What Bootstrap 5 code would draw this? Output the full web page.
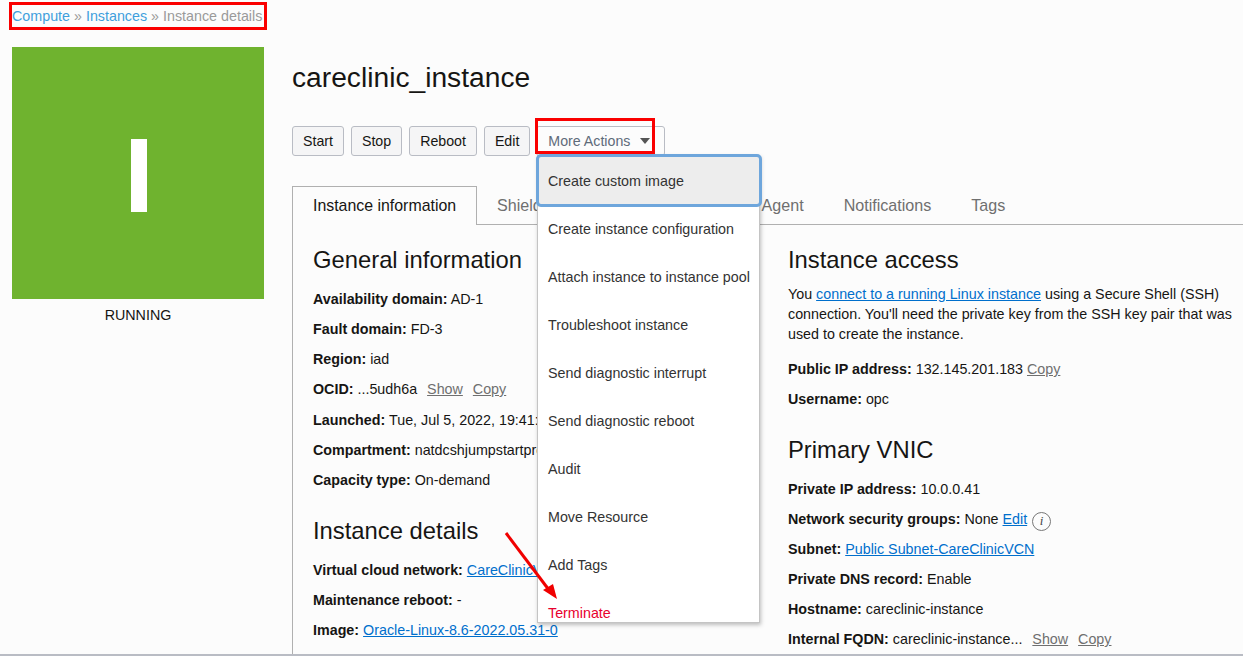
<!DOCTYPE html>
<html lang="en">
<head>
    <meta charset="UTF-8">
    <title>Instance details</title>
    <link href="https://cdn.jsdelivr.net/npm/bootstrap@5.3.3/dist/css/bootstrap.min.css" rel="stylesheet">
    <style>
        html, body { height: 656px; overflow: hidden; }
        body { font-family: "Liberation Sans", Arial, sans-serif; font-size: 14.3px; line-height: 20px; color: #161513; background: #fcfcfc; position: relative; }
        a { color: #006fcc; }
        .crumbs { height: 47px; padding: 6px 0 0 12px; color: #9a9a9a; }
        .crumbs a { color: #3f9fdc; text-decoration: none; }
        .page-wrap { height: 609px; border-bottom: 2px solid #b9bcc4; overflow: hidden; }
        .side-col { width: 252px; margin-left: 12px; margin-right: 28px; flex: none; }
        .status-tile { height: 252px; background: #6fb32f; padding: 4px 0 0 2px; }
        .status-bar { width: 16px; height: 73px; background: #fff; }
        .status-text { margin-top: 6px; }
        .main-col { flex: 1; min-width: 0; }
        .inst-title { font-size: 28.2px; line-height: 32px; font-weight: 400; margin: 14px 0 0; }
        .action-row { margin-top: 33px; gap: 7px; }
        .act-btn { height: 30px; padding: 0 10px; font-size: 14.2px; line-height: 28px; color: #161513; background: #f5f5f6; border: 1px solid #b9bcc4; border-radius: 3px; }
        .act-more { background: #fcfcfc; color: #5f6b7a; padding: 0 14px 0 11px; margin-left: -1px; }
        .caret-mark { display: inline-block; border: 5px solid transparent; border-top: 6px solid #555; border-bottom: 0; margin-left: 6px; vertical-align: 2px; }
        .tab-bar { margin-top: 30px; height: 39px; border-bottom: 1px solid #b0b0b0; font-size: 16.1px; }
        .tab-item { padding: 9px 20px 0; color: #6f6f6f; height: 39px; white-space: nowrap; }
        .tab-item.is-on { width: 185px; color: #161513; background: #fcfcfc; border: 1px solid #b0b0b0; border-bottom: 0; padding: 9px 0 0 20px; font-size: 15.9px; }
        .tab-body { border-left: 1px solid #b0b0b0; padding: 0 0 0 20px; }
        .info-left { width: 475px; flex: none; }
        .info-right { flex: 1; min-width: 0; }
        .sec-head { font-size: 23.8px; line-height: 30px; font-weight: 400; margin: 20px 0 14px; }
        .sec-gap { margin-top: 26px; }
        .left-gap { margin-top: 26px; }
        .tight-head { margin-bottom: 9px; }
        .kv { margin: 0 0 10px; white-space: nowrap; }
        .kv-tall { margin-bottom: 11px; }
        .kv-link { color: #6f6f6f; margin-left: 6px; }
        .kv-link-near { margin-left: 0; }
        .lead-text { margin: 0 0 15px; }
        .info-dot { display: inline-flex; align-items: center; justify-content: center; width: 19px; height: 19px; margin: -3px 0 -3px 1px; border: 1px solid #777; border-radius: 50%; font: italic 13px "Liberation Serif", serif; color: #444; vertical-align: -1px; }
        .act-menu { position: absolute; left: 537px; top: 155px; width: 223px; height: 468px; background: #fff; border: 1px solid #c4c4c4; box-shadow: 1px 2px 4px rgba(0,0,0,.25); overflow: hidden; color: #333; }
        .menu-row { height: 48px; line-height: 44px; padding-left: 10px; white-space: nowrap; }
        .menu-row.is-focus { height: 51px; line-height: 51px; background: #ededed; }
        .menu-row.is-red { color: #e8002d; }
        .focus-outline { position: absolute; left: 536px; top: 154px; width: 226px; height: 53px; border: 3px solid #6ea6dc; border-radius: 5px; pointer-events: none; }
        .red-box { position: absolute; border: 3px solid #fa0000; pointer-events: none; }
        .red-crumb { left: 9px; top: 2px; width: 258px; height: 28px; }
        .red-more { left: 535px; top: 118px; width: 120px; height: 36px; }
        .arrow-mark { position: absolute; left: 500px; top: 528px; width: 60px; height: 76px; }
    </style>
</head>
<body>
    <div class="crumbs"><a href="#">Compute</a> » <a href="#">Instances</a> » Instance details</div>
    <div class="page-wrap d-flex">
        <div class="side-col">
            <div class="status-tile d-flex align-items-center justify-content-center"><div class="status-bar"></div></div>
            <div class="status-text text-center">RUNNING</div>
        </div>
        <div class="main-col">
            <h1 class="inst-title">careclinic_instance</h1>
            <div class="action-row d-flex">
                <button class="act-btn">Start</button>
                <button class="act-btn">Stop</button>
                <button class="act-btn">Reboot</button>
                <button class="act-btn">Edit</button>
                <button class="act-btn act-more">More Actions <span class="caret-mark"></span></button>
            </div>
            <div class="tab-bar d-flex">
                <div class="tab-item is-on">Instance information</div>
                <div class="tab-item">Shielded instance</div>
                <div class="tab-item">Oracle Cloud Agent</div>
                <div class="tab-item">Notifications</div>
                <div class="tab-item">Tags</div>
            </div>
            <div class="tab-body d-flex">
                <div class="info-left">
                    <h2 class="sec-head">General information</h2>
                    <p class="kv"><b>Availability domain:</b> AD-1</p>
                    <p class="kv"><b>Fault domain:</b> FD-3</p>
                    <p class="kv"><b>Region:</b> iad</p>
                    <p class="kv kv-tall"><b>OCID:</b> ...5udh6a <a href="#" class="kv-link">Show</a> <a href="#" class="kv-link">Copy</a></p>
                    <p class="kv"><b>Launched:</b> Tue, Jul 5, 2022, 19:41:22 UTC</p>
                    <p class="kv"><b>Compartment:</b> natdcshjumpstartprod (root)</p>
                    <p class="kv"><b>Capacity type:</b> On-demand</p>
                    <h2 class="sec-head left-gap">Instance details</h2>
                    <p class="kv"><b>Virtual cloud network:</b> <a href="#">CareClinicVCN</a></p>
                    <p class="kv"><b>Maintenance reboot:</b> -</p>
                    <p class="kv"><b>Image:</b> <a href="#">Oracle-Linux-8.6-2022.05.31-0</a></p>
                    <p class="kv"><b>Launch mode:</b> PARAVIRTUALIZED</p>
                </div>
                <div class="info-right">
                    <h2 class="sec-head tight-head">Instance access</h2>
                    <p class="lead-text">You <a href="#">connect to a running Linux instance</a> using a Secure Shell (SSH) connection. You'll need the private key from the SSH key pair that was used to create the instance.</p>
                    <p class="kv"><b>Public IP address:</b> 132.145.201.183 <a href="#" class="kv-link kv-link-near">Copy</a></p>
                    <p class="kv"><b>Username:</b> opc</p>
                    <h2 class="sec-head sec-gap">Primary VNIC</h2>
                    <p class="kv"><b>Private IP address:</b> 10.0.0.41</p>
                    <p class="kv"><b>Network security groups:</b> None <a href="#">Edit</a> <span class="info-dot">i</span></p>
                    <p class="kv"><b>Subnet:</b> <a href="#">Public Subnet-CareClinicVCN</a></p>
                    <p class="kv"><b>Private DNS record:</b> Enable</p>
                    <p class="kv"><b>Hostname:</b> careclinic-instance</p>
                    <p class="kv"><b>Internal FQDN:</b> careclinic-instance... <a href="#" class="kv-link">Show</a> <a href="#" class="kv-link">Copy</a></p>
                </div>
            </div>
        </div>
    </div>

    <div class="act-menu">
        <div class="menu-row is-focus">Create custom image</div>
        <div class="menu-row">Create instance configuration</div>
        <div class="menu-row">Attach instance to instance pool</div>
        <div class="menu-row">Troubleshoot instance</div>
        <div class="menu-row">Send diagnostic interrupt</div>
        <div class="menu-row">Send diagnostic reboot</div>
        <div class="menu-row">Audit</div>
        <div class="menu-row">Move Resource</div>
        <div class="menu-row">Add Tags</div>
        <div class="menu-row is-red">Terminate</div>
    </div>
    <div class="focus-outline"></div>
    <div class="red-box red-crumb"></div>
    <div class="red-box red-more"></div>
    <svg class="arrow-mark" viewBox="0 0 60 76">
        <path d="M6 5 L49 62" stroke="#f00000" stroke-width="3" fill="none"/>
        <path d="M57 71 L43 62 L53 56 Z" fill="#f00000"/>
    </svg>
</body>
</html>
